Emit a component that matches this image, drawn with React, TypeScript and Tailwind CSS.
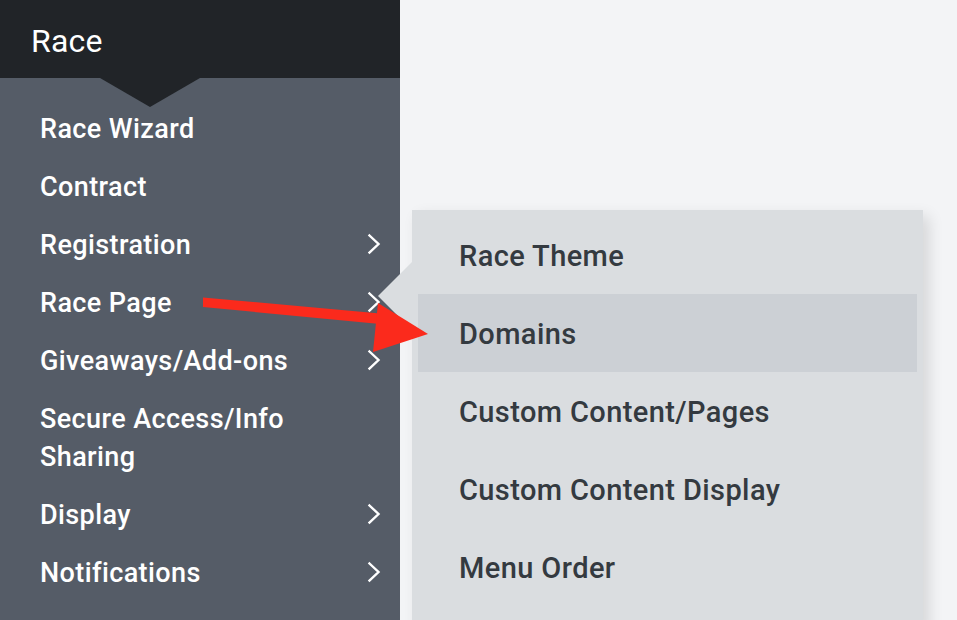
import React from "react";

/* ========================================================= */

type SideItem = {
  label: string[];
  sub?: boolean;
};

const sideItems: SideItem[] = [
  { label: ["Race Wizard"] },
  { label: ["Contract"] },
  { label: ["Registration"], sub: true },
  { label: ["Race Page"], sub: true },
  { label: ["Giveaways/Add-ons"], sub: true },
  { label: ["Secure Access/Info", "Sharing"] },
  { label: ["Display"], sub: true },
  { label: ["Notifications"], sub: true },
];

const subItems = [
  "Race Theme",
  "Domains",
  "Custom Content/Pages",
  "Custom Content Display",
  "Menu Order",
];

/* ========================================================= */

function Chevron() {
  return (
    <svg width="16" height="24" viewBox="0 0 16 24" fill="none">
      <path
        d="M3.5 3.5 L12.5 12 L3.5 20.5"
        stroke="white"
        strokeWidth="2.4"
        strokeLinecap="square"
      />
    </svg>
  );
}

export default function App() {
  return (
    <div
      className="relative flex w-[957px] h-[620px] overflow-hidden bg-[#f3f4f6]"
      style={{ fontFamily: "Roboto, 'Liberation Sans', sans-serif" }}
    >
      {/* SIDEBAR */}
      <div className="w-[400px] h-full flex flex-col bg-[#555c67] shrink-0">
        <div className="relative h-[78px] bg-[#212428] px-[31px] flex items-center">
          <span className="text-[32px] text-white leading-none mt-[3px] tracking-[0.2px]">
            Race
          </span>
          <div className="absolute left-[100px] top-[78px] w-0 h-0 border-x-[50px] border-x-transparent border-t-[29px] border-t-[#212428]" />
        </div>

        <div className="pt-[21px] flex flex-col">
          {sideItems.map((item) => (
            <div
              key={item.label.join(" ")}
              className="h-auto flex items-center justify-between pl-[40px] pr-[18px] py-[10px]"
            >
              <div className="relative top-[1px] flex flex-col text-white text-[27px] font-medium leading-[38px] tracking-[0.4px]">
                {item.label.map((l) => (
                  <span key={l}>{l}</span>
                ))}
              </div>
              {item.sub && <Chevron />}
            </div>
          ))}
        </div>
      </div>

      {/* CONTENT */}
      <div className="relative z-10 pt-[210px] pl-[12px]">
        <div className="relative w-[511px] h-[420px] bg-[#dadde0] pt-[6px] px-[6px] shadow-[6px_6px_14px_rgba(0,0,0,0.12)]">
          <div className="absolute -left-[34px] top-[52px] w-0 h-0 border-y-[34px] border-y-transparent border-r-[34px] border-r-[#dadde0]" />
          {subItems.map((s) => (
            <div
              key={s}
              className={
                s === "Domains"
                  ? "h-[78px] flex items-center pl-[41px] bg-[#ccd0d5]"
                  : "h-[78px] flex items-center pl-[41px]"
              }
            >
              <span className="text-[29px] font-medium text-[#343a40] tracking-[0.4px] mt-[3px]">
                {s}
              </span>
            </div>
          ))}
        </div>
      </div>

      {/* ARROW */}
      <svg
        className="absolute left-0 top-0 z-20 pointer-events-none"
        width="957"
        height="620"
        viewBox="0 0 957 620"
      >
        <polygon
          points="203,297.5 380,313.5 380,324 203,307"
          fill="#fb2a1c"
        />
        <polygon points="378,303 428,334 373,352" fill="#fb2a1c" />
      </svg>
    </div>
  );
}
